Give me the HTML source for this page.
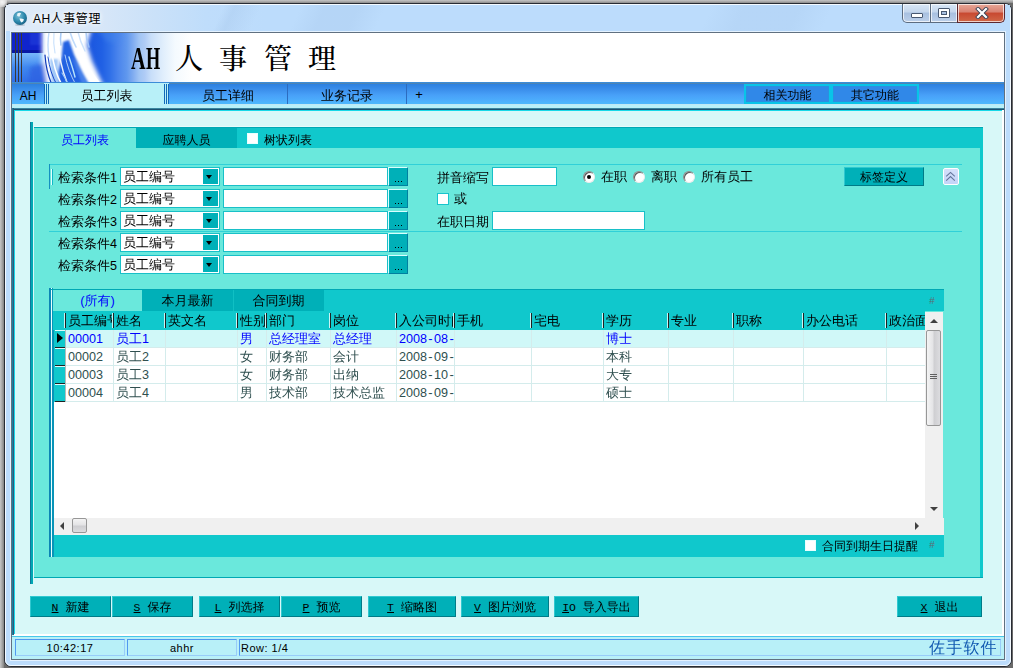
<!DOCTYPE html>
<html lang="zh-CN">
<head>
<meta charset="utf-8">
<title>AH人事管理</title>
<style>
*,*:before,*:after{box-sizing:border-box;margin:0;padding:0}
html,body{width:1013px;height:668px;overflow:hidden;background:#fff}
body{position:relative;font-family:"Liberation Sans","WenQuanYi Zen Hei","Noto Sans CJK SC",sans-serif;font-size:13px;color:#000;line-height:1}
.a{position:absolute}
.t13{font-family:"Liberation Sans","WenQuanYi Zen Hei","Noto Sans CJK SC",sans-serif;font-size:13px;line-height:13px;white-space:nowrap}
.t12{font-family:"Liberation Sans","WenQuanYi Zen Hei","Noto Sans CJK SC",sans-serif;font-size:12px;line-height:12px;white-space:nowrap}
.t13 i{font-style:normal;font-size:12.6px}
.t13 b{font-weight:normal;display:inline-block;width:7px;text-align:center}
.t12 i{font-style:normal;font-family:"Liberation Mono",monospace;font-size:11.5px}
u{text-decoration:underline}
/* window chrome */
#shadow{left:0;top:0;width:1013px;height:668px;background:#6a6a6a}
#shL{left:0;top:0;width:4px;height:668px;background:linear-gradient(90deg,#c6c6c6,#b2b2b2 34%,#9a9a9a 67%,#828282)}
#shT{left:0;top:0;width:1013px;height:3px;background:linear-gradient(180deg,#c6c6c6,#aaa 50%,#8a8a8a)}
#win{left:4px;top:3px;width:1008px;height:664px;background:#bcdcfc;border:1px solid #282c34;border-radius:7px}
#winin{left:5px;top:4px;width:1006px;height:662px;border:1px solid #f4faff;border-radius:6px;background:#bcdcfc}
#titlebg{left:6px;top:5px;width:1004px;height:26px;background:linear-gradient(115deg,rgba(168,200,236,0) 0,rgba(168,200,236,0) 198px,rgba(168,200,236,.4) 208px,rgba(168,200,236,0) 232px,rgba(168,200,236,0) 268px,rgba(168,200,236,.35) 290px,rgba(168,200,236,.35) 320px,rgba(168,200,236,0) 345px,rgba(168,200,236,0) 640px,rgba(168,200,236,.3) 670px,rgba(168,200,236,.3) 720px,rgba(168,200,236,0) 750px),linear-gradient(90deg,#e0ebf8 0,#d8e7f8 90px,#cae1f9 150px,#bfddfb 200px,#bcdcfc 260px)}
#inborder{left:10px;top:31px;width:996px;height:630px;border:1px solid #e4f2ff;background:#607080}
#content{left:12px;top:33px;width:992px;height:626px;background:#d8f8f8;overflow:hidden}
/* banner + main tabs */
#banner{left:12px;top:33px;width:992px;height:49px;background:#fff;overflow:hidden}
#bline{left:12px;top:82px;width:992px;height:2px;background:linear-gradient(180deg,#3c8cd8 50%,#4c84b4 50%)}
#tabbar{left:12px;top:84px;width:992px;height:20px;background:linear-gradient(180deg,#2c80e0,#3c90ec 30%,#48a0f8 55%,#4cacfc 80%,#4cb8fc)}
#tabstrip{left:12px;top:104px;width:992px;height:4px;background:#b8f0f8;border-top:1px solid #c0e8f4}
#seltab{left:44px;top:83px;width:125px;height:22px;background:#b8f0f8}
.vs{width:1px;height:20px;top:84px;background:#1068b8}
.tsep{width:1px;height:20px;top:84px;background:#2c6cc0}
.mt{top:89px;height:13px;text-align:center}
.fbtn{top:84px;height:20px;border:2px solid #08c4e8;background:#3088e8;box-shadow:inset 0 0 0 1px #2a90e0}
#pTop{left:12px;top:108px;width:992px;height:2px;background:linear-gradient(180deg,#3a86a0 50%,#1c5272 50%)}
#pTop2{left:14px;top:110px;width:988px;height:1px;background:#18d8e8}
#pLeft{left:12px;top:108px;width:2px;height:527px;background:linear-gradient(90deg,#1880a0 50%,#305878 50%)}
#pLeft2{left:14px;top:110px;width:1px;height:524px;background:#18d8e8}
#pRight{left:1002px;top:110px;width:2px;height:526px;background:#fff}
#pBot{left:14px;top:634px;width:990px;height:2px;background:#fff}
/* inner panel */
#ipBar{left:30px;top:122px;width:3px;height:462px;background:linear-gradient(90deg,#10789a 34%,#00a8b4 34%)}
#ipTop{left:34px;top:126px;width:949px;height:2px;background:linear-gradient(180deg,#e6fcfc 50%,#00a8b4 50%)}
#ipTabbar{left:34px;top:128px;width:949px;height:20px;background:#10c8cc}
#ipBody{left:34px;top:148px;width:946px;height:429px;background:#6ae8dc}
#ipRight{left:980px;top:148px;width:3px;height:430px;background:#10c8cc}
#ipBot{left:34px;top:577px;width:949px;height:1px;background:#00a8b4}
#itab1{left:34px;top:128px;width:102px;height:21px;background:#6ae8dc}
#itab2{left:136px;top:128px;width:101px;height:20px;background:#00b0b8}
.cb{background:#fff;border:1px solid #e8ffff}
.ln{height:1px;background:#30d0d8}
.lab{height:13px}
.inp{height:19px;background:#fff;border:1px solid #18c0c8}
.dd{width:15px;height:15px;background:#00b0b8}
.dd:after{content:"";position:absolute;left:3px;top:6px;border:4px solid transparent;border-top:4px solid #000;border-bottom:0;border-left-width:3.5px;border-right-width:3.5px}
.eb{width:20px;height:19px;background:#00b0b8;border-right:1px solid #0080a0;border-bottom:1px solid #0080a0;border-top:1px solid #d8ffff;border-left:1px solid #d8ffff}
.eb:after{content:"";position:absolute;left:6px;top:13px;width:1px;height:1px;background:#000;box-shadow:3px 0 #000,6px 0 #000}
.rad{width:12px;height:12px;border-radius:50%;background:#fff;border:1px solid #8c8c8c;border-right-color:#ececec;border-bottom-color:#ececec;box-shadow:inset 1px 1px 0 #5a5a5a}
.btn{background:#00b0b8;border-top:1px solid #30c8d0;border-left:1px solid #30c8d0;border-right:1px solid #007c88;border-bottom:1px solid #007c88;text-align:center}
/* grid */
#gBar{left:49px;top:288px;width:4px;height:269px;background:linear-gradient(90deg,#0c84b4 25%,#0890b8 25%,#0890b8 50%,#e8ffff 50%,#e8ffff 75%,#0894b8 75%)}
#gBar2{left:53px;top:330px;width:1px;height:227px;background:#0894b8}
#gTop{left:51px;top:289px;width:893px;height:1px;background:#00a8b4}
#gTabbar{left:53px;top:290px;width:891px;height:21px;background:#10c8cc}
#gtab1{left:53px;top:290px;width:89px;height:21px;background:#6ae8dc}
#gtab2{left:142px;top:290px;width:91px;height:21px;background:#00b0b8}
#gtab3{left:233px;top:290px;width:91px;height:21px;background:#00b0b8;border-left:1px solid #10c0c4}
#gHead{left:53px;top:311px;width:872px;height:19px;background:#10c8cc;overflow:hidden}
#gBody{left:53px;top:330px;width:872px;height:188px;background:#fff;overflow:hidden}
#gFoot{left:53px;top:535px;width:891px;height:22px;background:#10c8cc}
.hs{top:2px;width:2px;height:15px;background:linear-gradient(90deg,#c8f4f4 50%,#202020 50%)}
.hc{top:3px;height:14px;overflow:hidden}
.gr{left:0;width:873px;height:18px;border-bottom:1px solid #d4ecec}
.gc{top:0;height:17px;border-right:1px solid #d4ecec;overflow:hidden;padding:2px 0 0 2px;color:#2f4f4f}
.sel .gc{color:#0000ff}
.ind{left:0;top:0;width:12px;height:18px;background:#10c8cc}
.ind:after{content:"";position:absolute;left:2px;top:0;width:10px;height:18px;border-bottom:1px solid #202020;border-top:1px solid #e0fcfc}
#vsb{left:925px;top:312px;width:18px;height:206px;background:#f0f0f0}
#hsb{left:53px;top:518px;width:891px;height:17px;background:#f0f0f0}
.thumb{border:1px solid #979797;border-radius:2px;background:linear-gradient(90deg,#f4f4f4,#e4e4e6 45%,#cfcfd2 55%,#dcdcdf)}
/* bottom buttons + status */
.bb{top:596px;height:21px;padding-top:4px}
#stTop{left:12px;top:636px;width:992px;height:1px;background:#48c8e8}
#status{left:12px;top:637px;width:992px;height:22px;background:#b8f0f8}
.sp{top:639px;height:17px;border:1px solid;border-color:#5098f0 #98ccf8 #98ccf8 #5098f0;font:11px "Liberation Sans",sans-serif;line-height:16px;text-align:center;letter-spacing:.5px}
/* title bar */
#ttext{left:33px;top:11px;letter-spacing:.55px;font:12px "Liberation Sans","Noto Sans CJK SC",sans-serif;line-height:16px;white-space:nowrap;color:#000;text-shadow:0 0 6px #fff,0 0 4px #fff}
.capb{top:4px;height:19px;border:1px solid #5c6c80;border-top:0;background:linear-gradient(180deg,#d8e6f6 0,#c4d6ec 45%,#a8c0e0 50%,#bcd0ea 100%);box-shadow:inset 0 0 0 1px rgba(255,255,255,.7)}
#bt{left:131px;top:44px;height:32px;white-space:nowrap;color:#000}
.bt{position:absolute;top:0;font:500 28px "Liberation Serif","Noto Serif CJK SC",serif;line-height:32px}
.bl{position:absolute;top:-1px;font:bold 30.5px "Liberation Serif",serif;line-height:32px;transform-origin:0 0}
</style>
</head>
<body>
<div class="a" id="shadow"></div><div class="a" id="shL"></div><div class="a" id="shT"></div>
<div class="a" style="left:0;top:0;width:7px;height:7px;background:radial-gradient(circle at 2px 2px,#f4f4f4 0,#e4e4e4 40%,rgba(200,200,200,0) 100%)"></div><div class="a" id="win"></div><div class="a" id="winin"></div><div class="a" id="titlebg"></div>
<div class="a" id="inborder"></div><div class="a" id="content"></div>
<div class="a" id="banner"><svg width="992" height="49" viewBox="0 0 992 49">
<defs>
<linearGradient id="bg1" gradientUnits="userSpaceOnUse" x1="0" x2="200" y1="0" y2="0">
<stop offset="0" stop-color="#2a6ae4"/><stop offset="0.40" stop-color="#1c58e0"/><stop offset="0.45" stop-color="#2060e4"/><stop offset="0.49" stop-color="#3070e8"/><stop offset="0.53" stop-color="#4a84ec"/><stop offset="0.575" stop-color="#6098ee"/><stop offset="0.605" stop-color="#80acf0"/><stop offset="0.635" stop-color="#a0c4f4"/><stop offset="0.665" stop-color="#b0ccf6"/><stop offset="0.695" stop-color="#c8def9"/><stop offset="0.725" stop-color="#d4e6fa"/><stop offset="0.755" stop-color="#e0eefc"/><stop offset="0.785" stop-color="#eaf4fd"/><stop offset="0.815" stop-color="#f4fafe"/><stop offset="0.9" stop-color="#fff"/>
</linearGradient>
<linearGradient id="lb" x1="0" x2="0" y1="0" y2="1">
<stop offset="0" stop-color="#78b8fa"/><stop offset="0.5" stop-color="#4088f0"/><stop offset="1" stop-color="#3070e8"/>
</linearGradient>
<filter id="bl1" x="-20%" y="-20%" width="140%" height="140%"><feGaussianBlur stdDeviation="1.2"/></filter>
<filter id="bl2" x="-20%" y="-20%" width="140%" height="140%"><feGaussianBlur stdDeviation="2.2"/></filter>
<filter id="bl0" x="-20%" y="-20%" width="140%" height="140%"><feGaussianBlur stdDeviation="0.6"/></filter>
</defs>
<rect x="0" y="0" width="200" height="49" fill="url(#bg1)"/>
<rect x="0" y="0" width="31" height="18" fill="#1024cc"/>
<rect x="18" y="0" width="12" height="12" fill="#2040dc" opacity=".6" filter="url(#bl1)"/>
<rect x="0" y="17" width="31" height="3" fill="#0818a4"/>
<rect x="0" y="20" width="32" height="29" fill="url(#lb)"/>
<g filter="url(#bl2)">
<polygon points="30,-6 80,-6 75,12 80,28 93,56 76,56 62,28 54,10 50,30 48,56 34,56 30,30" fill="#fff"/>
<polygon points="18,34 32,30 36,56 16,56" fill="#2c60e0" opacity=".75"/>
<polygon points="84,-6 112,-6 106,10 94,8" fill="#4888ec" opacity=".45"/>
</g>
<g filter="url(#bl1)">
<polygon points="51,9 57,7 62,22 78,56 48,56 46,40 50,24" fill="#2462e2"/>
<polygon points="60,24 66,32 80,56 72,56" fill="#4480ea"/>
<polygon points="38,26 46,26 47,56 40,56" fill="#8cbcf6" opacity=".8"/>
</g>
<g filter="url(#bl0)" stroke-linecap="round" fill="none">
<path d="M33 22 Q34 38 40 52" stroke="#0c38b8" stroke-width="1.2"/>
<path d="M36 24 Q38 40 45 52" stroke="#1848c8" stroke-width="1"/>
<path d="M40 20 Q42 38 50 52" stroke="#fff" stroke-width="1.6"/>
<path d="M46 4 Q46 28 56 52" stroke="#fff" stroke-width="1.4" opacity=".9"/>
<path d="M57 24 Q61 36 63 44" stroke="#b8e4fc" stroke-width="1.4"/>
<path d="M53 22 Q56 38 64 52" stroke="#cfe6fc" stroke-width="1" opacity=".8"/>
<path d="M62 8 Q70 30 88 52" stroke="#fff" stroke-width="3"/>
<path d="M50 40 Q54 46 56 52" stroke="#9cc8f8" stroke-width="1.2"/>
</g>
<g filter="url(#bl0)" stroke-linecap="round" fill="none" opacity=".85">
<path d="M37 -1 Q35 12 37 24" stroke="#b4d4fa" stroke-width="1.4"/>
<path d="M42 -1 Q41 10 43 20" stroke="#c4defc" stroke-width="1.2"/>
<path d="M49 -1 Q48 6 49 12" stroke="#9cc4f6" stroke-width="1.6"/>
<path d="M58 -1 Q60 6 64 14" stroke="#b4d4fa" stroke-width="1.6"/>
<path d="M66 -1 Q68 8 73 18" stroke="#c4defc" stroke-width="1.4"/>
<path d="M74 -1 Q74 6 77 14" stroke="#a4c8f8" stroke-width="1.6"/>
</g>
<rect x="3" y="0" width="1" height="49" fill="#383838"/>
<rect x="6" y="0" width="1" height="49" fill="#383838"/>
<rect x="9" y="0" width="1" height="49" fill="#383838"/>
</svg>
</div>
<div class="a" id="bline"></div><div class="a" id="tabbar"></div><div class="a" id="tabstrip"></div><div class="a" id="seltab"></div>
<div class="a vs" style="left:44px"></div>
<div class="a vs" style="left:46px"></div>
<div class="a vs" style="left:48px"></div>
<div class="a vs" style="left:164px"></div>
<div class="a vs" style="left:166px"></div>
<div class="a vs" style="left:168px"></div>
<div class="a tsep" style="left:287px"></div><div class="a tsep" style="left:406px"></div>
<div class="a t13 mt" style="left:12px;width:32px;font-size:12px;top:90px">AH</div>
<div class="a t13 mt" style="left:49px;width:115px">员工列表</div>
<div class="a t13 mt" style="left:169px;width:118px">员工详细</div>
<div class="a t13 mt" style="left:288px;width:118px">业务记录</div>
<div class="a t13 mt" style="left:415px;width:8px;top:88px">+</div>
<div class="a fbtn" style="left:744px;width:87px"></div>
<div class="a fbtn" style="left:831px;width:88px"></div>
<div class="a t12 mt" style="left:744px;width:87px;top:89px">相关功能</div>
<div class="a t12 mt" style="left:831px;width:88px;top:89px">其它功能</div>
<div class="a" id="pTop"></div><div class="a" id="pTop2"></div>
<div class="a" id="pLeft"></div><div class="a" id="pLeft2"></div>
<div class="a" id="pRight"></div><div class="a" id="pBot"></div>
<div class="a" id="ipBar"></div><div class="a" id="ipTop"></div><div class="a" id="ipTabbar"></div>
<div class="a" id="ipBody"></div><div class="a" id="ipRight"></div><div class="a" id="ipBot"></div>
<div class="a" id="itab1"></div><div class="a" id="itab2"></div>
<div class="a t12" style="left:34px;top:134px;width:102px;text-align:center;color:#0000ff">员工列表</div>
<div class="a t12" style="left:136px;top:134px;width:101px;text-align:center">应聘人员</div>
<div class="a cb" style="left:247px;top:133px;width:11px;height:11px"></div>
<div class="a t12" style="left:264px;top:134px">树状列表</div>
<div class="a ln" style="left:49px;top:164px;width:913px"></div>
<div class="a ln" style="left:49px;top:231px;width:913px"></div>
<div class="a" style="left:49px;top:164px;width:1px;height:25px;background:#1490c0"></div>
<div class="a" style="left:51px;top:169px;width:2px;height:16px;background:linear-gradient(90deg,#e0ffff 50%,#10b8c8 50%)"></div>
<div class="a t13 lab" style="left:58px;top:171px">检索条件<i>1</i></div>
<div class="a inp" style="left:120px;top:167px;width:100px"></div><div class="a dd" style="left:203px;top:169px"></div>
<div class="a t13" style="left:123px;top:170px">员工编号</div>
<div class="a inp" style="left:223px;top:167px;width:165px"></div><div class="a eb" style="left:388px;top:167px"></div>
<div class="a t13 lab" style="left:58px;top:193px">检索条件<i>2</i></div>
<div class="a inp" style="left:120px;top:189px;width:100px"></div><div class="a dd" style="left:203px;top:191px"></div>
<div class="a t13" style="left:123px;top:192px">员工编号</div>
<div class="a inp" style="left:223px;top:189px;width:165px"></div><div class="a eb" style="left:388px;top:189px"></div>
<div class="a t13 lab" style="left:58px;top:215px">检索条件<i>3</i></div>
<div class="a inp" style="left:120px;top:211px;width:100px"></div><div class="a dd" style="left:203px;top:213px"></div>
<div class="a t13" style="left:123px;top:214px">员工编号</div>
<div class="a inp" style="left:223px;top:211px;width:165px"></div><div class="a eb" style="left:388px;top:211px"></div>
<div class="a t13 lab" style="left:58px;top:237px">检索条件<i>4</i></div>
<div class="a inp" style="left:120px;top:233px;width:100px"></div><div class="a dd" style="left:203px;top:235px"></div>
<div class="a t13" style="left:123px;top:236px">员工编号</div>
<div class="a inp" style="left:223px;top:233px;width:165px"></div><div class="a eb" style="left:388px;top:233px"></div>
<div class="a t13 lab" style="left:58px;top:259px">检索条件<i>5</i></div>
<div class="a inp" style="left:120px;top:255px;width:100px"></div><div class="a dd" style="left:203px;top:257px"></div>
<div class="a t13" style="left:123px;top:258px">员工编号</div>
<div class="a inp" style="left:223px;top:255px;width:165px"></div><div class="a eb" style="left:388px;top:255px"></div>
<div class="a t13 lab" style="left:437px;top:171px">拼音缩写</div>
<div class="a inp" style="left:492px;top:167px;width:65px"></div>
<div class="a rad" style="left:583px;top:171px"></div><div class="a" style="left:587px;top:175px;width:4px;height:4px;border-radius:50%;background:#000"></div>
<div class="a t13" style="left:601px;top:170px">在职</div>
<div class="a rad" style="left:633px;top:171px"></div>
<div class="a t13" style="left:651px;top:170px">离职</div>
<div class="a rad" style="left:683px;top:171px"></div>
<div class="a t13" style="left:701px;top:170px">所有员工</div>
<div class="a btn t12" style="left:844px;top:167px;width:80px;height:19px;padding-top:3px">标签定义</div>
<div class="a" style="left:943px;top:168px;width:16px;height:17px;background:linear-gradient(180deg,#d4e0fa,#c4d4f8);border:1px solid #fff;border-radius:2px">
<svg width="14" height="15" viewBox="0 0 14 15" style="position:absolute;left:0;top:0"><path d="M2.2 7.4 L6.5 3.4 L10.8 7.4 M2.2 11.6 L6.5 7.6 L10.8 11.6" fill="none" stroke="#64749a" stroke-width="1.1"/></svg></div>
<div class="a cb" style="left:437px;top:193px;width:12px;height:12px;border-color:#18c4cc"></div>
<div class="a t13" style="left:454px;top:192px">或</div>
<div class="a t13 lab" style="left:437px;top:215px">在职日期</div>
<div class="a inp" style="left:492px;top:211px;width:153px"></div>
<div class="a" id="gBar"></div><div class="a" id="gTop"></div><div class="a" id="gTabbar"></div>
<div class="a" id="gtab1"></div><div class="a" id="gtab2"></div><div class="a" id="gtab3"></div>
<div class="a t13" style="left:53px;top:294px;width:89px;text-align:center;color:#0000ff">(所有)</div>
<div class="a t13" style="left:142px;top:294px;width:91px;text-align:center">本月最新</div>
<div class="a t13" style="left:233px;top:294px;width:91px;text-align:center">合同到期</div>
<div class="a" style="left:929px;top:296px;font:10px 'Liberation Mono',monospace;color:#5c6c74">#</div>
<div class="a" id="gHead"><div class="a hs" style="left:11px"></div><div class="a hc t13" style="left:15px;width:44px">员工编号</div><div class="a hs" style="left:59px"></div><div class="a hc t13" style="left:63px;width:48px">姓名</div><div class="a hs" style="left:111px"></div><div class="a hc t13" style="left:115px;width:68px">英文名</div><div class="a hs" style="left:183px"></div><div class="a hc t13" style="left:187px;width:25px">性别</div><div class="a hs" style="left:212px"></div><div class="a hc t13" style="left:216px;width:60px">部门</div><div class="a hs" style="left:276px"></div><div class="a hc t13" style="left:280px;width:62px">岗位</div><div class="a hs" style="left:342px"></div><div class="a hc t13" style="left:346px;width:54px">入公司时间</div><div class="a hs" style="left:400px"></div><div class="a hc t13" style="left:404px;width:73px">手机</div><div class="a hs" style="left:477px"></div><div class="a hc t13" style="left:481px;width:68px">宅电</div><div class="a hs" style="left:549px"></div><div class="a hc t13" style="left:553px;width:61px">学历</div><div class="a hs" style="left:614px"></div><div class="a hc t13" style="left:618px;width:61px">专业</div><div class="a hs" style="left:679px"></div><div class="a hc t13" style="left:683px;width:66px">职称</div><div class="a hs" style="left:749px"></div><div class="a hc t13" style="left:753px;width:79px">办公电话</div><div class="a hs" style="left:832px"></div><div class="a hc t13" style="left:836px;width:36px">政治面貌</div></div>
<div class="a" id="gBody">
<div class="a gr sel" style="top:0px;background:#d0f8f8;"><div class="a ind"></div><div class="a gc t13" style="left:13px;width:48px"><i>00001</i></div><div class="a gc t13" style="left:61px;width:52px">员工<i>1</i></div><div class="a gc t13" style="left:113px;width:72px"></div><div class="a gc t13" style="left:185px;width:29px">男</div><div class="a gc t13" style="left:214px;width:64px">总经理室</div><div class="a gc t13" style="left:278px;width:66px">总经理</div><div class="a gc t13" style="left:344px;width:58px"><i>2008</i><b>-</b><i>08</i><b>-</b><i>01</i></div><div class="a gc t13" style="left:402px;width:77px"></div><div class="a gc t13" style="left:479px;width:72px"></div><div class="a gc t13" style="left:551px;width:65px">博士</div><div class="a gc t13" style="left:616px;width:65px"></div><div class="a gc t13" style="left:681px;width:70px"></div><div class="a gc t13" style="left:751px;width:83px"></div><div class="a gc t13" style="left:834px;width:54px"></div></div>
<div class="a gr" style="top:18px;"><div class="a ind"></div><div class="a gc t13" style="left:13px;width:48px"><i>00002</i></div><div class="a gc t13" style="left:61px;width:52px">员工<i>2</i></div><div class="a gc t13" style="left:113px;width:72px"></div><div class="a gc t13" style="left:185px;width:29px">女</div><div class="a gc t13" style="left:214px;width:64px">财务部</div><div class="a gc t13" style="left:278px;width:66px">会计</div><div class="a gc t13" style="left:344px;width:58px"><i>2008</i><b>-</b><i>09</i><b>-</b><i>01</i></div><div class="a gc t13" style="left:402px;width:77px"></div><div class="a gc t13" style="left:479px;width:72px"></div><div class="a gc t13" style="left:551px;width:65px">本科</div><div class="a gc t13" style="left:616px;width:65px"></div><div class="a gc t13" style="left:681px;width:70px"></div><div class="a gc t13" style="left:751px;width:83px"></div><div class="a gc t13" style="left:834px;width:54px"></div></div>
<div class="a gr" style="top:36px;"><div class="a ind"></div><div class="a gc t13" style="left:13px;width:48px"><i>00003</i></div><div class="a gc t13" style="left:61px;width:52px">员工<i>3</i></div><div class="a gc t13" style="left:113px;width:72px"></div><div class="a gc t13" style="left:185px;width:29px">女</div><div class="a gc t13" style="left:214px;width:64px">财务部</div><div class="a gc t13" style="left:278px;width:66px">出纳</div><div class="a gc t13" style="left:344px;width:58px"><i>2008</i><b>-</b><i>10</i><b>-</b><i>01</i></div><div class="a gc t13" style="left:402px;width:77px"></div><div class="a gc t13" style="left:479px;width:72px"></div><div class="a gc t13" style="left:551px;width:65px">大专</div><div class="a gc t13" style="left:616px;width:65px"></div><div class="a gc t13" style="left:681px;width:70px"></div><div class="a gc t13" style="left:751px;width:83px"></div><div class="a gc t13" style="left:834px;width:54px"></div></div>
<div class="a gr" style="top:54px;"><div class="a ind"></div><div class="a gc t13" style="left:13px;width:48px"><i>00004</i></div><div class="a gc t13" style="left:61px;width:52px">员工<i>4</i></div><div class="a gc t13" style="left:113px;width:72px"></div><div class="a gc t13" style="left:185px;width:29px">男</div><div class="a gc t13" style="left:214px;width:64px">技术部</div><div class="a gc t13" style="left:278px;width:66px">技术总监</div><div class="a gc t13" style="left:344px;width:58px"><i>2008</i><b>-</b><i>09</i><b>-</b><i>01</i></div><div class="a gc t13" style="left:402px;width:77px"></div><div class="a gc t13" style="left:479px;width:72px"></div><div class="a gc t13" style="left:551px;width:65px">硕士</div><div class="a gc t13" style="left:616px;width:65px"></div><div class="a gc t13" style="left:681px;width:70px"></div><div class="a gc t13" style="left:751px;width:83px"></div><div class="a gc t13" style="left:834px;width:54px"></div></div>

<div class="a" style="left:4px;top:3px;width:0;height:0;border:5.5px solid transparent;border-left:6px solid #000;border-right:0"></div><div class="a" style="left:12px;top:0;width:1px;height:72px;background:#b0bcbc"></div>
</div>
<div class="a" id="vsb">
<div class="a" style="left:5px;top:7px;border:4px solid transparent;border-bottom:4px solid #404040;border-top:0"></div>
<div class="a thumb" style="left:1px;top:18px;width:15px;height:96px"></div>
<div class="a" style="left:5px;top:62px;width:7px;height:1px;background:#606060;box-shadow:0 2px #606060,0 4px #606060"></div>
<div class="a" style="left:5px;top:195px;border:4px solid transparent;border-top:4px solid #404040;border-bottom:0"></div>
</div>
<div class="a" id="hsb">
<div class="a" style="left:7px;top:4px;border:4px solid transparent;border-right:4px solid #404040;border-left:0"></div>
<div class="a thumb" style="left:19px;top:0;width:15px;height:15px;background:linear-gradient(180deg,#f4f4f4,#e4e4e6 45%,#cfcfd2 55%,#dcdcdf)"></div>
<div class="a" style="left:862px;top:4px;border:4px solid transparent;border-left:4px solid #404040;border-right:0"></div>
</div>
<div class="a" id="gFoot"></div><div class="a" id="gBar2"></div>
<div class="a cb" style="left:805px;top:540px;width:11px;height:11px"></div>
<div class="a t12" style="left:822px;top:540px">合同到期生日提醒</div>
<div class="a" style="left:929px;top:540px;font:10px 'Liberation Mono',monospace;color:#5c6c74">#</div>
<div class="a btn bb t12" style="left:30px;width:81px"><i><u>N</u></i><i> </i>新建</div>
<div class="a btn bb t12" style="left:112px;width:81px"><i><u>S</u></i><i> </i>保存</div>
<div class="a btn bb t12" style="left:199px;width:81px"><i><u>L</u></i><i> </i>列选择</div>
<div class="a btn bb t12" style="left:281px;width:81px"><i><u>P</u></i><i> </i>预览</div>
<div class="a btn bb t12" style="left:368px;width:88px"><i><u>T</u></i><i> </i>缩略图</div>
<div class="a btn bb t12" style="left:461px;width:88px"><i><u>V</u></i><i> </i>图片浏览</div>
<div class="a btn bb t12" style="left:554px;width:85px"><i><u>I</u>O</i><i> </i>导入导出</div>
<div class="a btn bb t12" style="left:897px;width:85px"><i><u>X</u></i><i> </i>退出</div>
<div class="a" id="stTop"></div>
<div class="a" id="status"></div>
<div class="a sp" style="left:15px;width:110px">10:42:17</div>
<div class="a sp" style="left:127px;width:110px">ahhr</div>
<div class="a sp" style="left:239px;width:762px;text-align:left;padding-left:1px">Row: 1/4</div>
<div class="a" style="left:929px;top:640px;font:16px 'Liberation Sans','WenQuanYi Zen Hei','Noto Sans CJK SC',sans-serif;line-height:16px;letter-spacing:1.2px;color:#1058b0;white-space:nowrap">佐手软件</div>
<div class="a" id="ttext">AH人事管理</div>
<svg class="a" style="left:12px;top:10px" width="16" height="16" viewBox="0 0 16 16">
<defs><radialGradient id="gl" cx="0.4" cy="0.35" r="0.7"><stop offset="0" stop-color="#7cc0d8"/><stop offset="0.6" stop-color="#2c88ac"/><stop offset="1" stop-color="#185c80"/></radialGradient></defs>
<ellipse cx="8" cy="15" rx="5" ry="1" fill="#8090a0" opacity=".4"/>
<circle cx="8" cy="8" r="7" fill="url(#gl)"/>
<path d="M5.5 3.2 Q8 2.2 9.2 3.4 Q7.8 5 7.6 6.4 Q6 6.6 5 5.4 Z" fill="#e8f4f8"/>
<path d="M7.4 8.6 Q10 8 12 9.6 Q11.4 12 9.4 12.6 Q8 11 7.4 8.6 Z" fill="#f4fafc"/>
</svg>
<div class="a capb" style="left:902px;width:29px;border-radius:0 0 0 5px"></div>
<div class="a capb" style="left:930px;width:28px"></div>
<div class="a capb" style="left:957px;width:48px;border-radius:0 0 5px 0;border-color:#5c2830;background:linear-gradient(180deg,#e8a898 0,#d88070 45%,#c84830 50%,#d06848 100%)"></div>
<div class="a" style="left:911px;top:13px;width:12px;height:5px;border:1px solid #485870;background:#fff;border-radius:1px"></div>
<div class="a" style="left:938px;top:8px;width:12px;height:10px;border:1px solid #485870;background:#fff;border-radius:1px"></div>
<div class="a" style="left:941px;top:11px;width:6px;height:4px;border:1px solid #485870;background:#a8c0e0"></div>
<svg class="a" style="left:975px;top:7px" width="14" height="12" viewBox="0 0 14 12"><path d="M3 2 L11 10 M11 2 L3 10" stroke="#3c4456" stroke-width="4" stroke-linecap="square"/><path d="M3 2 L11 10 M11 2 L3 10" stroke="#fff" stroke-width="2.2" stroke-linecap="square"/></svg>
<div class="a" id="bt">
<span class="bl" style="left:0;transform:scaleX(.66)">A</span>
<span class="bl" style="left:15px;transform:scaleX(.60)">H</span>
<span class="bt" style="left:44px">人</span>
<span class="bt" style="left:88px">事</span>
<span class="bt" style="left:133px">管</span>
<span class="bt" style="left:177px">理</span>
</div>
</body>
</html>
